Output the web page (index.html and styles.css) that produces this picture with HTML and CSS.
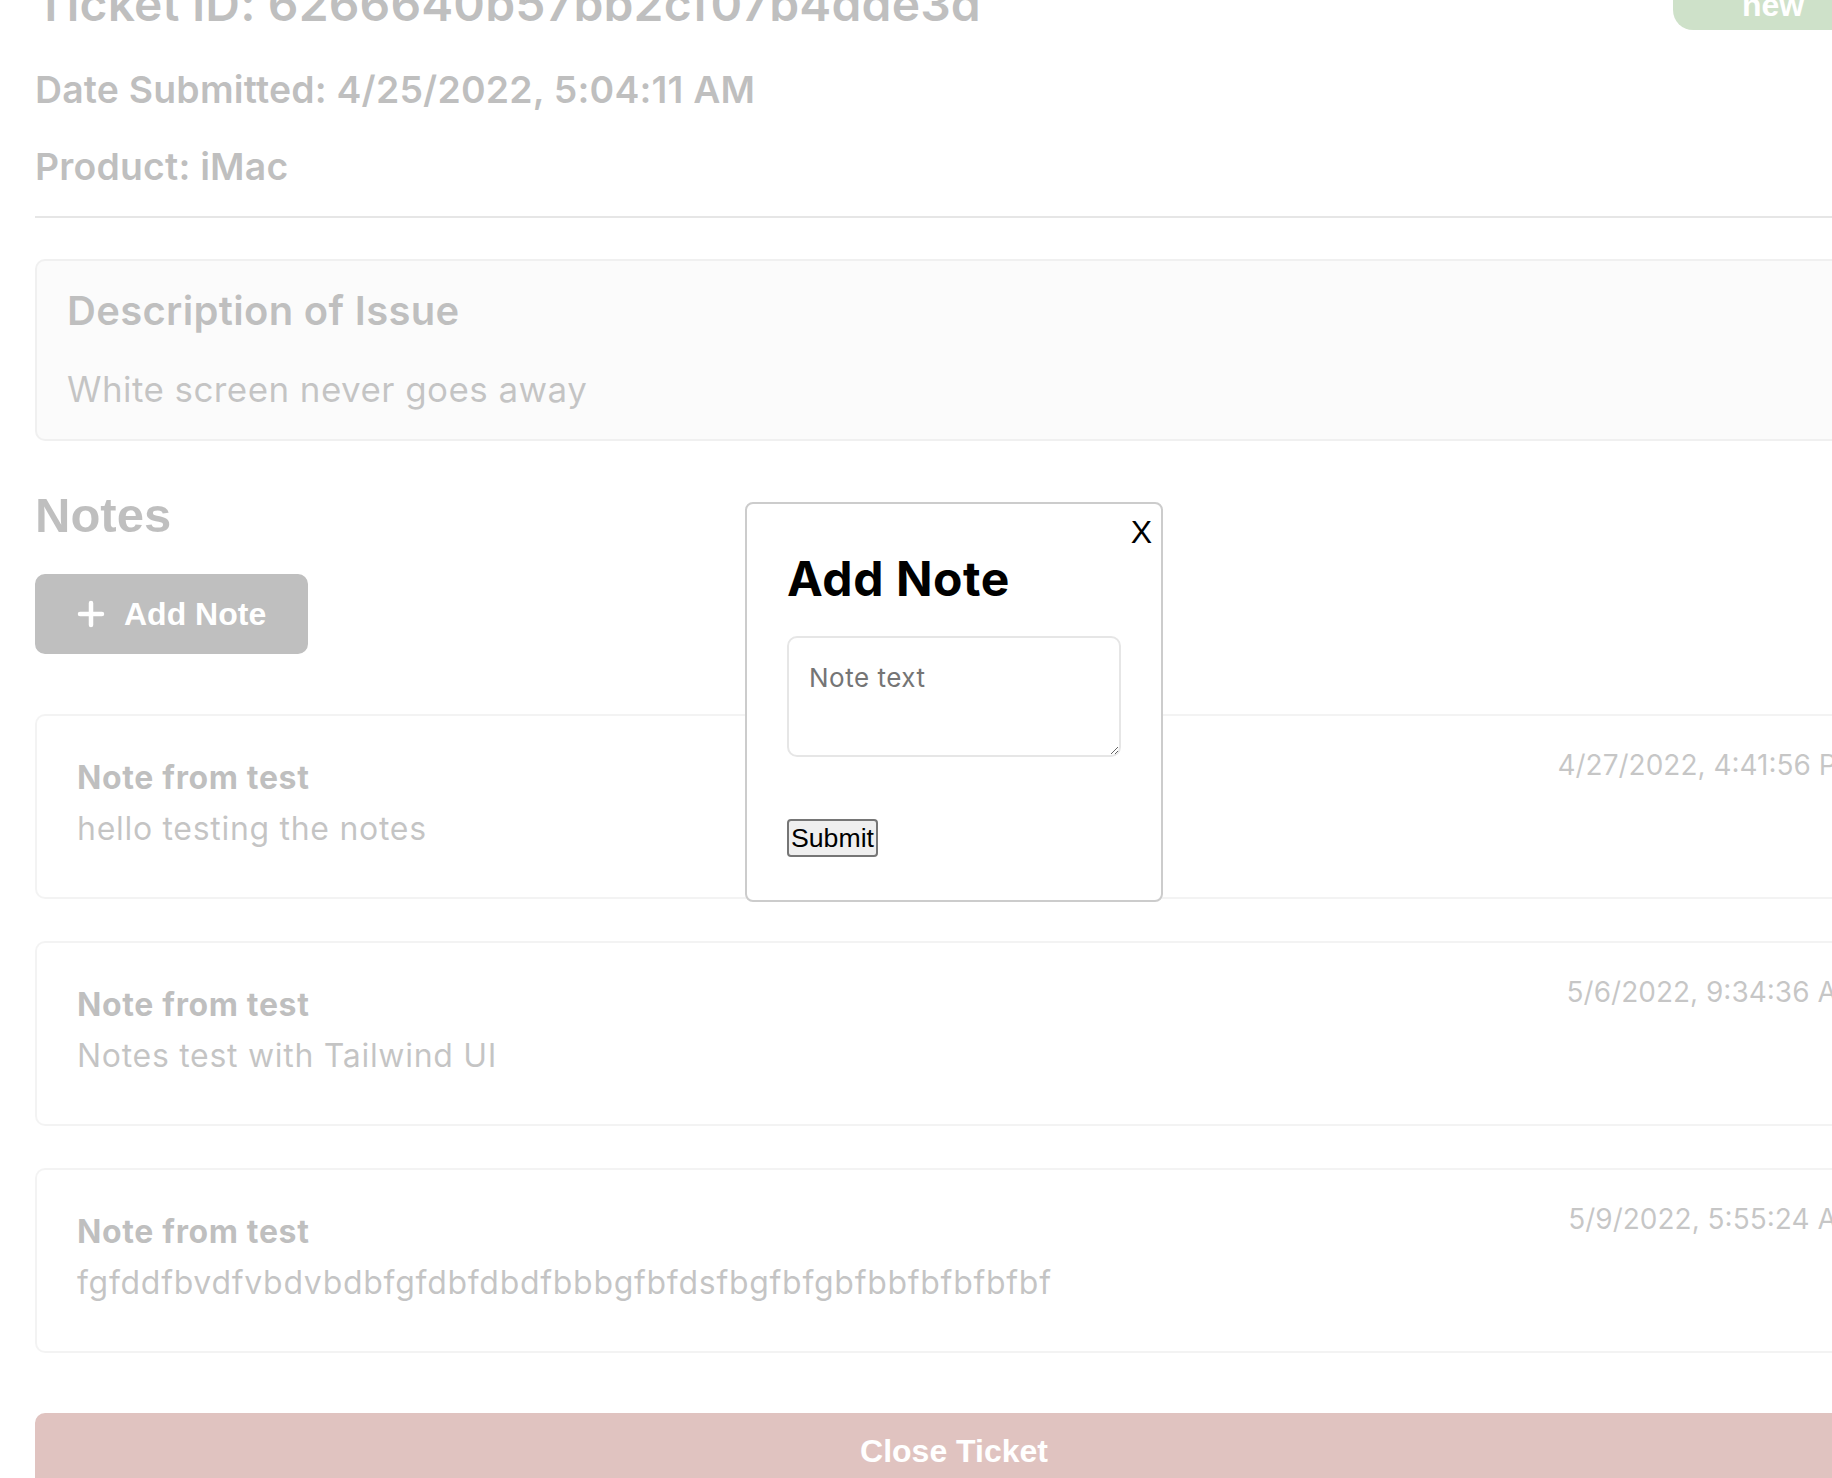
FILE: index.html
```html
<!DOCTYPE html>
<html lang="en">
<head>
<meta charset="utf-8">
<title>Ticket</title>
<link rel="stylesheet" href="styles.css">
</head>
<body>
<div class="page">
  <div class="ticket-page">
    <header class="ticket-header">
      <h2 class="ticket-title"><span>Ticket ID: 6266640b57bb2cf07b4dde3d</span><span class="status status-new">new</span></h2>
      <h3 class="meta first">Date Submitted: 4/25/2022, 5:04:11 AM</h3>
      <h3 class="meta">Product: iMac</h3>
      <hr class="divider">
      <div class="ticket-desc">
        <h3>Description of Issue</h3>
        <p>White screen never goes away</p>
      </div>
      <h2 class="notes-title">Notes</h2>
    </header>

    <button class="btn add-note" type="button">
      <svg class="plus" viewBox="0 0 28 28" width="28" height="28" aria-hidden="true"><path d="M14 3v22M3 14h22" stroke="#fff" stroke-width="4.5" stroke-linecap="round" fill="none"/></svg>
      <span>Add Note</span>
    </button>

    <div class="notes-list">
      <div class="note">
        <h4>Note from test</h4>
        <p>hello testing the notes</p>
        <div class="note-date">4/27/2022, 4:41:56 PM</div>
      </div>
      <div class="note">
        <h4>Note from test</h4>
        <p>Notes test with Tailwind UI</p>
        <div class="note-date">5/6/2022, 9:34:36 AM</div>
      </div>
      <div class="note">
        <h4>Note from test</h4>
        <p>fgfddfbvdfvbdvbdbfgfdbfdbdfbbbgfbfdsfbgfbfgbfbbfbfbfbfbf</p>
        <div class="note-date">5/9/2022, 5:55:24 AM</div>
      </div>
    </div>

    <button class="btn btn-block btn-danger" type="button">Close Ticket</button>
  </div>
</div>

<div class="overlay">
  <div class="modal" role="dialog">
    <h2 class="modal-title">Add Note</h2>
    <button class="btn-close" type="button">X</button>
    <form class="note-form">
      <textarea name="noteText" placeholder="Note text"></textarea>
      <button class="submit" type="submit">Submit</button>
    </form>
  </div>
</div>
</body>
</html>
```

FILE: styles.css
```css
html, body {
  margin: 0;
  padding: 0;
  overflow: hidden;
  background: #ffffff;
}

body {
  width: 1832px;
  height: 1478px;
  font-family: Inter, "Open Sans", "Liberation Sans", sans-serif;
  color: #000;
  position: relative;
}

.page {
  width: 1908px;
}

.ticket-page {
  margin: -26px 35px 0;
}

/* header */
.ticket-title {
  display: flex;
  justify-content: space-between;
  align-items: center;
  margin: 0;
  font-size: 48px;
  font-weight: 600;
  line-height: 60px;
  letter-spacing: 0.003em;
}

.status {
  width: 200px;
  height: 52px;
  border-radius: 20px;
  color: #fff;
  font-family: "Liberation Sans", Arial, sans-serif;
  font-size: 32px;
  font-weight: 700;
  line-height: 54px;
  letter-spacing: 0;
  text-align: center;
}

.status-new {
  background: #3f872b;
}

.meta {
  margin: 0 0 21px;
  font-size: 37.4px;
  font-weight: 600;
  line-height: 56px;
  letter-spacing: 0.005em;
}

.meta.first {
  margin-top: 28px;
}

.divider {
  margin: 0;
  height: 0;
  border: 0;
  border-top: 2px solid #9b9b9b;
}

.ticket-desc {
  margin-top: 41px;
  padding: 25px 30px;
  border: 2px solid #c3c3c3;
  border-radius: 10px;
  background: #efefef;
}

.ticket-desc h3 {
  margin: 0 0 28px;
  font-size: 40px;
  font-weight: 600;
  line-height: 50px;
  letter-spacing: 0.008em;
}

.ticket-desc p {
  margin: 0;
  font-size: 35px;
  line-height: 50px;
  letter-spacing: 0.012em;
  color: #171717;
}

.notes-title {
  margin: 46px 0 31px;
  font-family: "Liberation Sans", Arial, sans-serif;
  font-size: 49px;
  font-weight: 700;
  line-height: 56px;
}

/* buttons */
.btn {
  font-family: "Liberation Sans", Arial, sans-serif;
  font-weight: 700;
  font-size: 32px;
  color: #fff;
  border-radius: 10px;
  cursor: pointer;
}

.add-note {
  display: inline-flex;
  align-items: center;
  gap: 19px;
  height: 80px;
  padding: 0 40px;
  border: 2px solid #000;
  background: #000;
  vertical-align: top;
}

.plus {
  display: block;
  flex: none;
}

.notes-list {
  margin-top: 60px;
}

.note {
  position: relative;
  margin-bottom: 42px;
  padding: 40px 40px 39px;
  border: 2px solid #d0d0d0;
  border-radius: 10px;
  background: #fff;
}

.note h4 {
  margin: 0;
  font-size: 32px;
  font-weight: 700;
  line-height: 44px;
  letter-spacing: 0.02em;
}

.note p {
  margin: 0;
  font-size: 32px;
  line-height: 58px;
  letter-spacing: 0.022em;
  color: #171717;
}

.note-date {
  position: absolute;
  top: 29px;
  right: 9px;
  font-size: 28px;
  line-height: 40px;
  letter-spacing: 0;
  color: #1c1c1c;
}

.btn-block {
  display: block;
  width: 100%;
  margin-top: 60px;
}

.btn-danger {
  height: 77px;
  border: 2px solid #831307;
  background: #831307;
}

/* modal */
.overlay {
  position: fixed;
  inset: 0;
  background: rgba(255, 255, 255, 0.75);
}

.modal {
  position: absolute;
  left: 745px;
  top: 502px;
  width: 418px;
  height: 400px;
  box-sizing: border-box;
  padding: 40px;
  border: 2px solid #ccc;
  border-radius: 8px;
  background: #fff;
}

.modal-title {
  margin: 0 0 22px;
  font-size: 48px;
  font-weight: 700;
  line-height: 70px;
  letter-spacing: 0.012em;
}

.btn-close {
  position: absolute;
  top: 10px;
  right: 9px;
  padding: 0;
  border: 0;
  background: none;
  font-family: "Liberation Sans", Arial, sans-serif;
  font-size: 32px;
  line-height: 36px;
  color: #000;
  cursor: pointer;
}

.note-form textarea {
  display: block;
  width: 100%;
  height: 121px;
  box-sizing: border-box;
  margin: 0;
  padding: 20px;
  border: 2px solid #e6e6e6;
  border-radius: 10px;
  font-family: Inter, "Open Sans", sans-serif;
  font-size: 26px;
  line-height: 40px;
  letter-spacing: 0.02em;
  color: #000;
}

.note-form textarea::placeholder {
  color: #757575;
}

.submit {
  display: block;
  margin-top: 62px;
  height: 38px;
  padding: 0 2px;
  border: 2px solid #767676;
  border-radius: 4px;
  background: #efefef;
  font-family: "Liberation Sans", Arial, sans-serif;
  font-size: 26.67px;
  line-height: 32px;
  color: #000;
}
```
